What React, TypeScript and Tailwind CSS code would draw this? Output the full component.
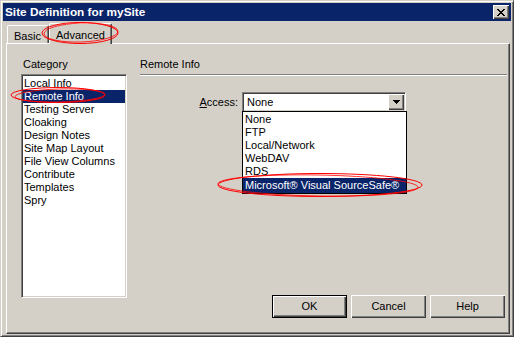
import React from "react";

const categories = [
  "Local Info",
  "Remote Info",
  "Testing Server",
  "Cloaking",
  "Design Notes",
  "Site Map Layout",
  "File View Columns",
  "Contribute",
  "Templates",
  "Spry",
];

const accessOptions = ["None", "FTP", "Local/Network", "WebDAV", "RDS", "Microsoft® Visual SourceSafe®"];

// 8x7 pixel close glyph, classic style
const closeX = [
  "11....11",
  ".11..11.",
  "..1111..",
  "...11...",
  "..1111..",
  ".11..11.",
  "11....11",
];

const CloseGlyph = () => (
  <svg width="8" height="7" viewBox="0 0 8 7" shapeRendering="crispEdges">
    {closeX.map((row, y) =>
      row.split("").map((c, x) => (c === "1" ? <rect key={`${x}-${y}`} x={x} y={y} width="1" height="1" fill="#000" /> : null))
    )}
  </svg>
);

const ArrowDown = () => (
  <svg width="7" height="4" viewBox="0 0 7 4" shapeRendering="crispEdges">
    <rect x="0" y="0" width="7" height="1" fill="#000" />
    <rect x="1" y="1" width="5" height="1" fill="#000" />
    <rect x="2" y="2" width="3" height="1" fill="#000" />
    <rect x="3" y="3" width="1" height="1" fill="#000" />
  </svg>
);

const Button = ({ label, isDefault }: { label: string; isDefault?: boolean }) => (
  <button
    className={
      isDefault
        ? "w-[75px] h-[23px] bg-[#d4d0c8] border border-black shadow-[inset_1px_1px_0_#fff,inset_-1px_-1px_0_#404040,inset_-2px_-2px_0_#808080] text-[11px] text-black"
        : "w-[75px] h-[23px] bg-[#d4d0c8] shadow-[inset_1px_1px_0_#fff,inset_-1px_-1px_0_#404040,inset_-2px_-2px_0_#808080] text-[11px] text-black"
    }
  >
    {label}
  </button>
);

export default function App() {
  return (
    <div className="relative w-[514px] h-[337px] bg-[#d4d0c8] font-['Liberation_Sans',Arial,sans-serif] text-[11px] leading-[13px] text-black">
      <div className="w-full h-full flex flex-col border border-t-[#d4d0c8] border-l-[#d4d0c8] border-r-[#404040] border-b-[#404040] p-[2px] shadow-[inset_1px_1px_0_#fff,inset_-1px_-1px_0_#808080]">
        {/* Title bar */}
        <div className="h-[18px] shrink-0 bg-[#0a246a] flex items-center justify-between pl-[2px] pr-[2px]">
          <span className="text-white font-bold text-[11.8px] leading-[18px]">Site Definition for mySite</span>
          <div className="w-[16px] h-[14px] bg-[#d4d0c8] flex items-center justify-center shadow-[inset_1px_1px_0_#fff,inset_-1px_-1px_0_#404040,inset_-2px_-2px_0_#808080]">
            <CloseGlyph />
          </div>
        </div>

        {/* Tabs */}
        <div className="h-[22px] shrink-0 flex items-end pl-[4px]">
          <div className="w-[42px] h-[18px] pt-[4px] pl-[6px] bg-[#d4d0c8] border-l border-t border-r border-l-white border-t-white border-r-[#404040] rounded-t-[2px] shadow-[inset_-1px_0_0_#808080]">
            Basic
          </div>
          <div className="relative z-10 w-[63px] h-[21px] mb-[-1px] pt-[5px] text-center bg-[#d4d0c8] border-l border-t border-r border-l-white border-t-white border-r-[#404040] rounded-t-[2px] shadow-[inset_-1px_0_0_#808080]">
            Advanced
          </div>
        </div>

        {/* Panel */}
        <div className="flex-1 flex ml-[3px] mr-[1px] border border-l-white border-t-white border-r-[#404040] border-b-[#404040] shadow-[inset_-1px_-1px_0_#808080]">
          {/* Category column */}
          <div className="ml-[14px] pt-[14px] flex flex-col">
            <div className="h-[13px] pl-[2px]">Category</div>
            <div className="mt-[3px] w-[106px] h-[224px] bg-white border border-t-[#808080] border-l-[#808080] border-r-white border-b-white shadow-[inset_1px_1px_0_#404040,inset_-1px_-1px_0_#d4d0c8] p-[1px] pt-[2px]">
              {categories.map((c) => (
                <div
                  key={c}
                  className={
                    c === "Remote Info"
                      ? "h-[13px] pl-[1px] bg-[#0a246a] text-white whitespace-nowrap"
                      : "h-[13px] pl-[1px] whitespace-nowrap"
                  }
                >
                  {c}
                </div>
              ))}
            </div>
          </div>

          {/* Remote info column */}
          <div className="flex-1 ml-[13px] pr-[2px] pt-[14px] flex flex-col">
            <div className="h-[13px]">Remote Info</div>
            <div className="mt-[3px] h-[2px] border-t border-t-[#808080] border-b border-b-white" />

            <div className="mt-[16px] flex items-center">
              <div className="w-[98px] text-right">
                <span className="underline">A</span>ccess:
              </div>
              <div className="relative ml-[4px] w-[164px] h-[20px] bg-white flex items-center justify-between border border-t-[#808080] border-l-[#808080] border-r-white border-b-white shadow-[inset_1px_1px_0_#404040,inset_-1px_-1px_0_#d4d0c8] p-[1px]">
                <span className="pl-[3px]">None</span>
                <div className="w-[16px] h-[16px] bg-[#d4d0c8] flex items-center justify-center shadow-[inset_1px_1px_0_#fff,inset_-1px_-1px_0_#404040,inset_-2px_-2px_0_#808080]">
                  <ArrowDown />
                </div>

                {/* open dropdown list */}
                <div className="absolute left-[-1px] top-[18px] z-20 w-[165px] bg-white border border-black pt-[1px]">
                  {accessOptions.map((o, i) => (
                    <div
                      key={o}
                      className={
                        i === accessOptions.length - 1
                          ? "h-[15px] pl-[2px] pt-[1px] bg-[#0a246a] text-white whitespace-nowrap"
                          : "h-[13px] pl-[2px] whitespace-nowrap"
                      }
                    >
                      {o}
                    </div>
                  ))}
                </div>
              </div>
            </div>

            <div className="mt-auto mb-[15px] flex justify-end gap-[4px] pr-[2px]">
              <Button label="OK" isDefault />
              <Button label="Cancel" />
              <Button label="Help" />
            </div>
          </div>
        </div>
      </div>

      {/* red annotation marks */}
      <svg className="absolute inset-0 pointer-events-none z-30" width="514" height="337" viewBox="0 0 514 337" fill="none">
        <ellipse cx="80" cy="33" rx="38" ry="10.5" stroke="#ff0000" strokeWidth="1" />
        <ellipse cx="81" cy="32.5" rx="37" ry="9.5" stroke="#ff0000" strokeWidth="0.8" transform="rotate(-2 81 32.5)" />
        <ellipse cx="58" cy="95" rx="47" ry="7.5" stroke="#ff0000" strokeWidth="1" />
        <ellipse cx="60" cy="95.5" rx="45" ry="6.5" stroke="#ff0000" strokeWidth="0.8" transform="rotate(-1.5 60 95.5)" />
        <ellipse cx="320" cy="185" rx="102" ry="11.5" stroke="#ff0000" strokeWidth="1" />
        <ellipse cx="318" cy="185.5" rx="100" ry="10.5" stroke="#ff0000" strokeWidth="0.8" transform="rotate(1 318 185.5)" />
      </svg>
    </div>
  );
}
